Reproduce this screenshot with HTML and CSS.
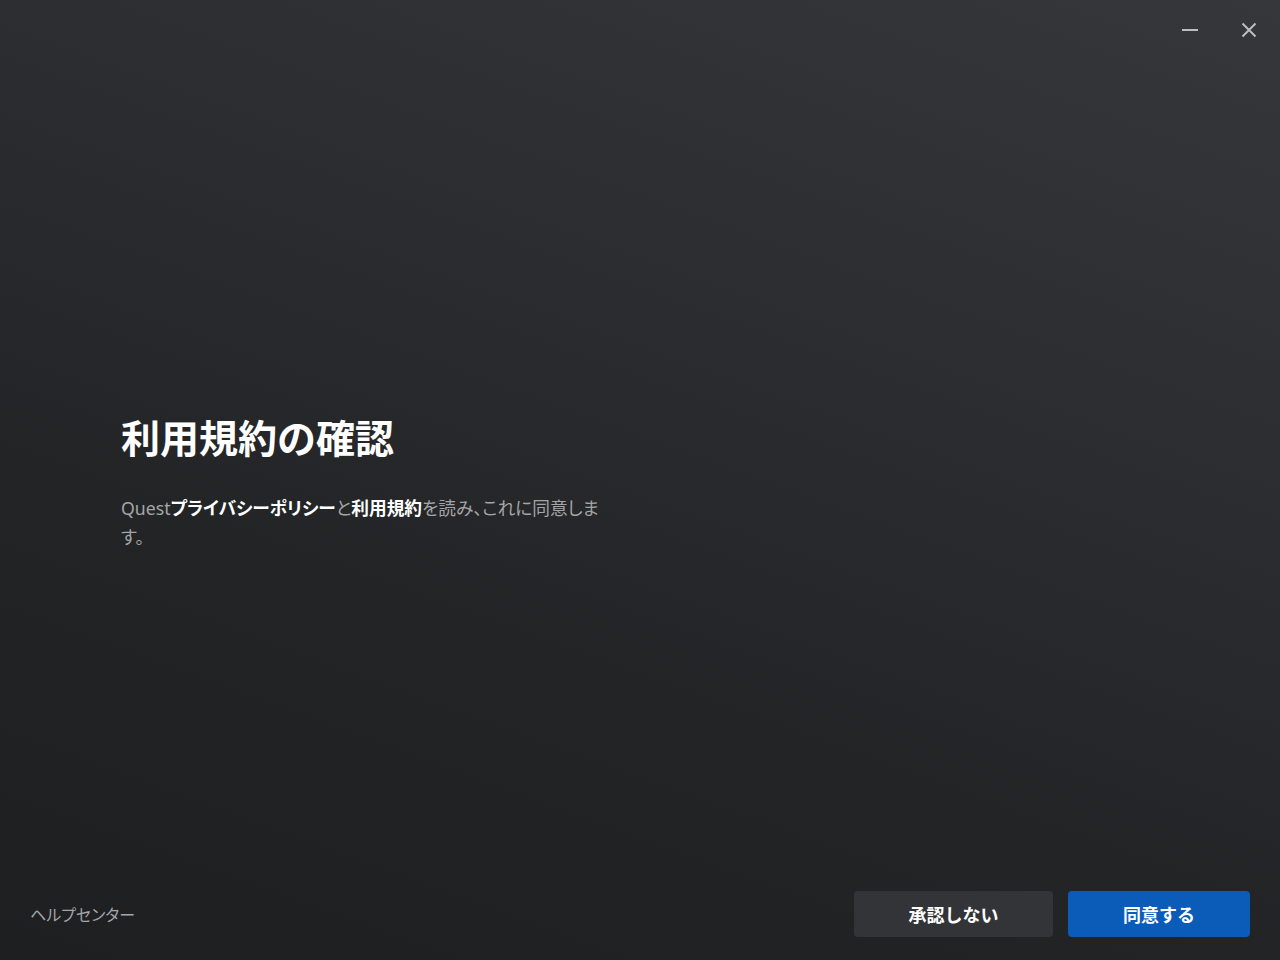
FILE: index.html
```html
<!DOCTYPE html>
<html lang="ja">
<head>
<meta charset="utf-8">
<title>利用規約の確認</title>
<link rel="stylesheet" href="styles.css">
</head>
<body>
<div class="window">
  <header class="titlebar">
    <button class="win-btn" aria-label="最小化">
      <svg width="16" height="16" viewBox="0 0 16 16"><line x1="0" y1="8" x2="16" y2="8" stroke="#bcbdbf" stroke-width="2"/></svg>
    </button>
    <button class="win-btn" aria-label="閉じる">
      <svg width="16" height="16" viewBox="0 0 16 16"><path d="M1.5 1.5 L14.5 14.5 M14.5 1.5 L1.5 14.5" stroke="#bcbdbf" stroke-width="2" fill="none"/></svg>
    </button>
  </header>
  <main class="content">
    <h1 class="title">利用規約の確認</h1>
    <p class="desc">Quest<strong>プライバシーポリシー</strong>と<strong>利用規約</strong>を読み、これに同意します。</p>
  </main>
  <footer class="footer">
    <a class="help">ヘルプセンター</a>
    <div class="actions">
      <button class="btn btn-secondary">承認しない</button>
      <button class="btn btn-primary">同意する</button>
    </div>
  </footer>
</div>
</body>
</html>
```
FILE: styles.css
```css
html, body {
  margin: 0;
  padding: 0;
}
body {
  font-family: "Noto Sans CJK JP", "Noto Sans", sans-serif;
  color: #ffffff;
}
.window {
  width: 1280px;
  height: 960px;
  display: flex;
  flex-direction: column;
  background: linear-gradient(200deg, #36373a 0%, #2c2d30 35%, #232426 65%, #1e1f21 100%);
  overflow: hidden;
}
.titlebar {
  height: 60px;
  display: flex;
  justify-content: flex-end;
  align-items: flex-start;
  padding: 10px 11px 0 0;
  box-sizing: border-box;
  gap: 19px;
}
.win-btn {
  width: 40px;
  height: 40px;
  background: none;
  border: none;
  padding: 0;
  display: flex;
  align-items: center;
  justify-content: center;
  cursor: pointer;
}
.content {
  flex: 1;
  padding: 353px 0 0 121px;
}
.title {
  margin: 0;
  font-size: 39px;
  line-height: 47px;
  font-weight: 700;
  color: #ffffff;
}
.desc {
  margin: 34px 0 0 0;
  max-width: 484px;
  font-family: "Noto Sans", "Noto Sans CJK JP", sans-serif;
  font-feature-settings: "palt";
  font-size: 17.7px;
  line-height: 29px;
  color: #a4a5a7;
}
.desc strong {
  color: #ffffff;
  font-weight: 700;
}
.footer {
  display: flex;
  justify-content: space-between;
  align-items: center;
  padding: 0 30px 23px 30px;
}
.help {
  font-size: 16px;
  font-feature-settings: "palt";
  color: #a4a5a7;
  cursor: pointer;
}
.actions {
  display: flex;
  gap: 15px;
}
.btn {
  height: 46px;
  border: none;
  border-radius: 4px;
  font-family: "Noto Sans CJK JP", "Noto Sans", sans-serif;
  font-size: 18px;
  font-weight: 700;
  line-height: 44px;
  color: #ffffff;
  cursor: pointer;
}
.btn-secondary {
  width: 199px;
  background: #333437;
}
.btn-primary {
  width: 182px;
  background: #0a5cb8;
}
```
